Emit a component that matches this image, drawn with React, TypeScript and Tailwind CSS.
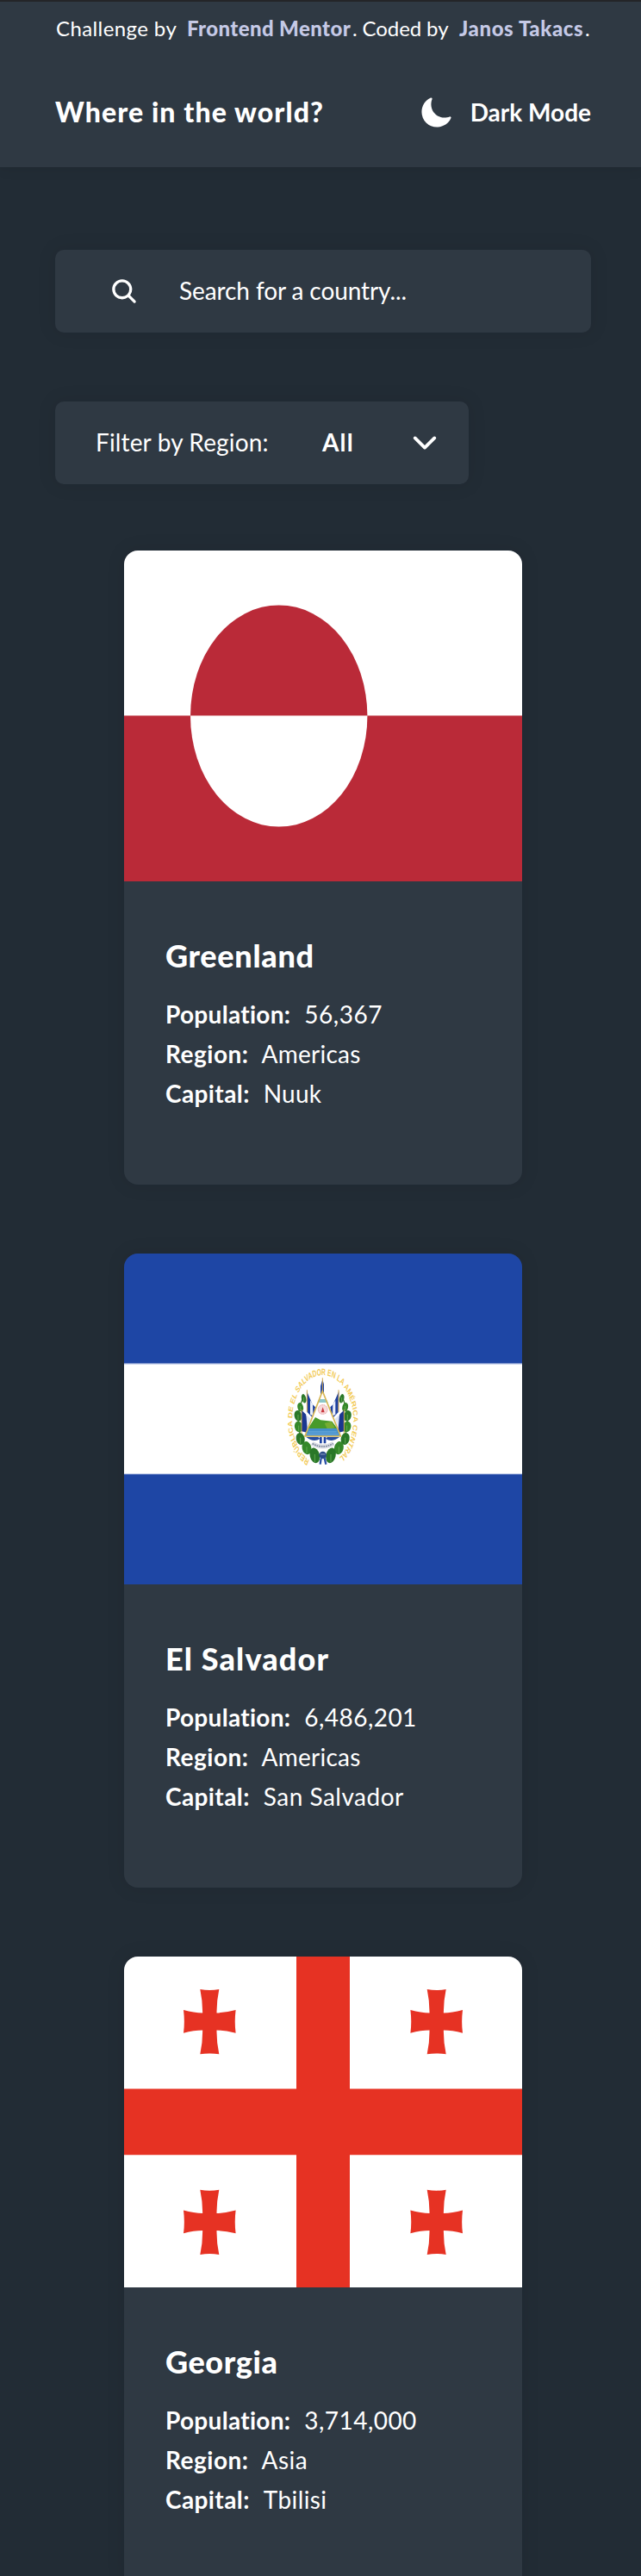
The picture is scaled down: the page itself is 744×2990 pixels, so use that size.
import type { ReactNode } from "react";
import { IoMoon, IoSearch, IoChevronDown } from "react-icons/io5";

function GreenlandFlag() {
  return (
    <svg viewBox="0 0 462 384" className="block h-96 w-full">
      <rect width="462" height="384" fill="#fff" />
      <rect y="192" width="462" height="192" fill="#ba2a38" />
      <path d="M77 192a102.7 128.6 0 0 1 205.4 0z" fill="#ba2a38" />
      <path d="M77 192a102.7 128.6 0 0 0 205.4 0z" fill="#fff" />
      <path d="M0 191.7h462" stroke="#dd959c" strokeWidth="1" />
    </svg>
  );
}

const leaves: [number, number, number, number][] = [
  [66, 550, 8, 16], [78, 580, 10, 16], [86, 610, 13, 19], [84, 648, 14, 19],
  [78, 690, 15, 21], [56, 722, 16, 23], [28, 748, 17, 27],
];

function Laurel() {
  return (
    <g>
      <path d="M-66 540Q-96 610-80 670Q-62 728-20 758" stroke="#3c7d2c" strokeWidth="4" fill="none" transform="translate(734 0)" />
      {leaves.map(([x, y, rx, ry], i) => (
        <g key={i}>
          <ellipse cx={734 - x} cy={y} rx={rx} ry={ry} fill={i % 2 ? "#35882a" : "#2a7728"} transform={`rotate(-14 ${734 - x} ${y})`} />
          <path d={`M${734 - x} ${y + ry - 4}v${-ry}`} stroke="#5fa850" strokeWidth="3" />
        </g>
      ))}
    </g>
  );
}

function Banners() {
  return (
    <g>
      <path d="M678 524l20 46 10 10-6 40-22-22z" fill="#1c3fa0" />
      <path d="M690 556l9 14 1 40-10-4z" fill="#e9eefa" />
      <path d="M660 590l14 14 10 20-6 44-18-4z" fill="#1a3690" />
      <path d="M676 606l16 14-12 34z" fill="#dfe6f5" />
      <path d="M679 520v76M660 588v84" stroke="#cda64c" strokeWidth="3" />
    </g>
  );
}

function ElSalvadorFlag() {
  return (
    <svg viewBox="0 0 462 384" className="block h-96 w-full">
      <rect width="462" height="384" fill="#1e46a5" />
      <rect y="127.7" width="462" height="128.3" fill="#fff" />
      <path d="M0 128.2h462M0 255.8h462" stroke="#b9c6e6" strokeWidth="1" />
      <g transform="translate(-14 -15) scale(.33333)">
        <g transform="translate(734 624) scale(.71 1.04)">
          <path id="motto" d="M-66 135A150 150 0 1 1 72 132" fill="none" />
          <text fill="#f2ca55" fontSize="31" fontWeight="700" fontFamily="Liberation Sans, sans-serif">
            <textPath href="#motto" textLength="788" lengthAdjust="spacingAndGlyphs">REPÚBLICA DE EL SALVADOR EN LA AMÉRICA CENTRAL</textPath>
          </text>
        </g>
        <Laurel />
        <g transform="translate(1468 0) scale(-1 1)"><Laurel /></g>
        <Banners />
        <g transform="translate(1468 0) scale(-1 1)"><Banners /></g>
        <path d="M733 484l5 16v36h-12v-30z" fill="#1f44a3" />
        <path d="M733 478v50" stroke="#d0a84a" strokeWidth="3" />
        <path d="M733 524L672 681H796z" fill="#fff" />
        <path d="M722 552h24l6 12h-35z" fill="#8cc7c9" />
        <circle cx="734" cy="588" r="18" fill="#f6dada" />
        <circle cx="734" cy="588" r="16" fill="none" stroke="#e5a5aa" strokeWidth="3" strokeDasharray="4 3" />
        <path d="M734 580l6 18h-12z" fill="#c8363d" />
        <path d="M682 655l26-40 18 10 40 4 19 26z" fill="#489a29" />
        <path d="M740 636l24-6 12 22-26 4z" fill="#76ad31" />
        <path d="M682 654h103l10 27H672z" fill="#4590cb" />
        <path d="M684 666h98M678 674h110" stroke="#72aee0" strokeWidth="3" />
        <path d="M733 524L672 681H796z" fill="none" stroke="#d8b755" strokeWidth="5" />
        <path d="M676 684q26 20 48 6l-6-6zM792 684q-26 20-48 6l6-6z" fill="#294e9f" />
        <path d="M727 684v22M741 684v22" stroke="#1f44a3" strokeWidth="8" />
        <path d="M696 706q38 22 76 0" stroke="#d9dce4" strokeWidth="15" fill="none" />
        <path d="M698 707q36 20 72 0" stroke="#69758e" strokeWidth="4" strokeDasharray="5 3" fill="none" />
        <circle cx="734" cy="747" r="13" fill="#2a4b88" />
        <path d="M728 757l-3 22M740 757l5 22" stroke="#2a50a6" strokeWidth="7" />
        <path d="M726 744h16" stroke="#8f9fc4" strokeWidth="3" />
      </g>
    </svg>
  );
}

const crossPositions: [number, number][] = [[99.3, 75.7], [362.7, 75.7], [99.3, 308.3], [362.7, 308.3]];

function GeorgiaFlag() {
  return (
    <svg viewBox="0 0 462 384" className="block h-96 w-full">
      <rect width="462" height="384" fill="#fff" />
      <path d="M200 0h62v384h-62zM0 153.5h462v76.7H0z" fill="#e63223" />
      {crossPositions.map(([x, y]) => (
        <path
          key={`${x}-${y}`}
          transform={`translate(${x} ${y})`}
          d="M-11-37.6Q0-35.6 11-37.6Q8-23 8.2-10.2Q18-10.6 30.3-13.8Q28.6 0 30.3 13Q18 9.8 8.2 9.8Q8 24 11 37.6Q0 35.8-11 37.6Q-8 24-8.2 9.8Q-18 9.8-30.3 13Q-28.6 0-30.3-13.8Q-18-10.6-8.2-10.2Q-8-23-11-37.6z"
          fill="#e63223"
        />
      ))}
    </svg>
  );
}

type Country = {
  name: ReactNode;
  flag: ReactNode;
  population: ReactNode;
  region: ReactNode;
  capital: ReactNode;
};

const countries: Country[] = [
  {
    name: <span className="tracking-[0.7px]">Greenland</span>,
    flag: <GreenlandFlag />,
    population: <span className="tracking-[0.5px]">56,367</span>,
    region: <span className="tracking-[0.25px]">Americas</span>,
    capital: <span className="tracking-[0.2px]">Nuuk</span>,
  },
  {
    name: <span className="tracking-[1.15px]">El Salvador</span>,
    flag: <ElSalvadorFlag />,
    population: <span className="tracking-[0.45px]">6,486,201</span>,
    region: <span className="tracking-[0.25px]">Americas</span>,
    capital: <span className="tracking-[0.5px]">San Salvador</span>,
  },
  {
    name: <span className="tracking-[0.6px]">Georgia</span>,
    flag: <GeorgiaFlag />,
    population: <span className="tracking-[0.45px]">3,714,000</span>,
    region: <span className="tracking-[0.5px]">Asia</span>,
    capital: <span className="tracking-[0.4px]">Tbilisi</span>,
  },
];

function CountryCard({ country }: { country: Country }) {
  return (
    <article className="h-[736px] w-[462px] overflow-hidden rounded-2xl bg-[#2f3943] shadow-[0_0_20px_4px_rgba(0,0,0,0.06)]">
      {country.flag}
      <div className="px-12 pt-16">
        <h2 className="text-[36px] leading-[44px] font-black">{country.name}</h2>
        <dl className="mt-[23px] text-[28px] leading-[46px]">
          <div className="flex gap-4">
            <dt className="font-bold tracking-[0.3px]">Population:</dt>
            <dd>{country.population}</dd>
          </div>
          <div className="flex gap-[15px]">
            <dt className="font-bold tracking-[0.5px]">Region:</dt>
            <dd>{country.region}</dd>
          </div>
          <div className="flex gap-4">
            <dt className="font-bold tracking-[0.4px]">Capital:</dt>
            <dd>{country.capital}</dd>
          </div>
        </dl>
      </div>
    </article>
  );
}

export default function App() {
  return (
    <div className="h-[2990px] overflow-hidden bg-[#222c35] font-[Lato,sans-serif] text-white">
      <header className="h-[194px] border-t-2 border-[#242528] bg-[#2f3943] pt-[13px] shadow-[0_0_16px_rgba(0,0,0,0.1)]">
        <p className="flex pl-[65px] text-[24px] leading-9 whitespace-pre">
          <span className="w-[152px] tracking-[0.4px]">Challenge by</span>
          <a className="w-[192px] font-black tracking-[0.4px] text-[#c5c9e6]">Frontend Mentor</a>
          <span className="w-[124px] tracking-[-0.1px]">. Coded by</span>
          <a className="w-[146px] font-black tracking-[0.6px] text-[#c5c9e6]">Janos Takacs</a>
          <span>.</span>
        </p>
        <div className="mt-[59px] flex h-10 items-center justify-between pr-[58px] pl-16">
          <h1 className="text-[32px] leading-10 font-black tracking-[1.1px]">Where in the world?</h1>
          <button className="flex items-center text-[28px] leading-10 font-bold">
            <IoMoon className="mr-5 size-[39px]" />
            <span>Dark Mode</span>
          </button>
        </div>
      </header>

      <main className="pt-24">
        <div className="ml-16 flex h-24 w-[622px] items-center rounded-[10px] bg-[#2f3943] pl-[63px] text-[28px] shadow-[0_0_20px_4px_rgba(0,0,0,0.06)]">
          <IoSearch className="mr-[47px] size-[34px]" />
          <span className="pb-0.5 leading-10 tracking-[-0.1px]">Search for a country...</span>
        </div>

        <div className="mt-20 ml-16 flex h-24 w-[480px] items-center rounded-[10px] bg-[#2f3943] pl-[47px] text-[28px] shadow-[0_0_20px_4px_rgba(0,0,0,0.06)]">
          <span className="w-[263px] pb-0.5 leading-10 tracking-[0.15px]">Filter by Region:</span>
          <span className="w-[99px] pb-0.5 leading-10 font-bold tracking-[1.2px]">All</span>
          <IoChevronDown className="size-10" />
        </div>

        <section className="mt-[77px] ml-36 flex flex-col gap-20">
          {countries.map((country, i) => (
            <CountryCard key={i} country={country} />
          ))}
        </section>
      </main>
    </div>
  );
}
